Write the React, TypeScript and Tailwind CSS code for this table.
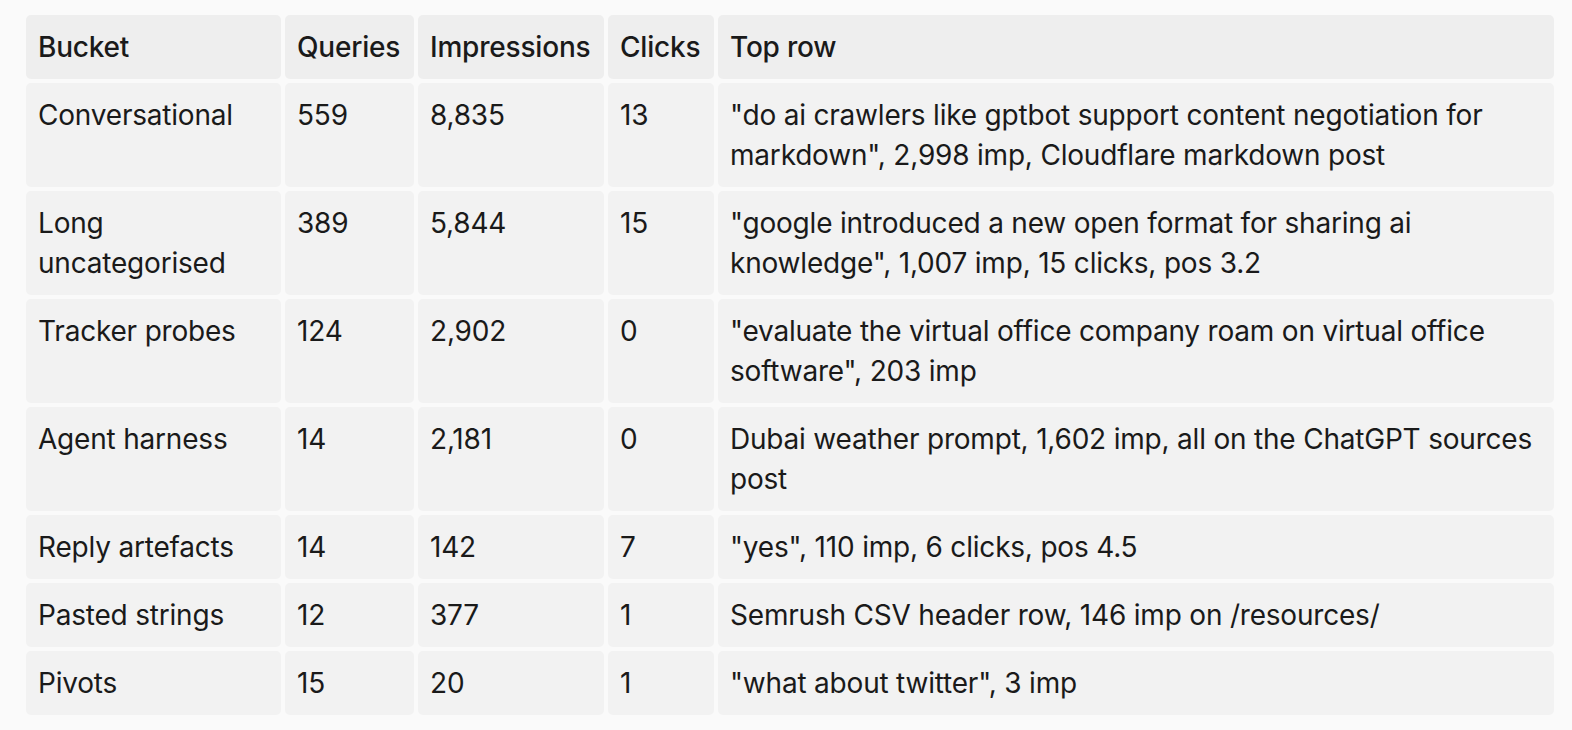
const rows = [
  { bucket: "Conversational", queries: "559", impressions: "8,835", clicks: "13", top: "\"do ai crawlers like gptbot support content negotiation for markdown\", 2,998 imp, Cloudflare markdown post" },
  { bucket: "Long uncategorised", queries: "389", impressions: "5,844", clicks: "15", top: "\"google introduced a new open format for sharing ai knowledge\", 1,007 imp, 15 clicks, pos 3.2" },
  { bucket: "Tracker probes", queries: "124", impressions: "2,902", clicks: "0", top: "\"evaluate the virtual office company roam on virtual office software\", 203 imp" },
  { bucket: "Agent harness", queries: "14", impressions: "2,181", clicks: "0", top: "Dubai weather prompt, 1,602 imp, all on the ChatGPT sources post" },
  { bucket: "Reply artefacts", queries: "14", impressions: "142", clicks: "7", top: "\"yes\", 110 imp, 6 clicks, pos 4.5" },
  { bucket: "Pasted strings", queries: "12", impressions: "377", clicks: "1", top: "Semrush CSV header row, 146 imp on /resources/" },
  { bucket: "Pivots", queries: "15", impressions: "20", clicks: "1", top: "\"what about twitter\", 3 imp" },
];

const th = "rounded-[5px] bg-[#eeeeee] px-3 py-3 text-left align-top font-medium";
const td = "rounded-[5px] bg-[#f2f2f2] px-3 py-3 align-top";

export default function App() {
  return (
    <div className="min-h-screen bg-[#fafafa] pl-[22px] pt-[11px] font-['Inter',sans-serif] text-[28px] leading-[40px] tracking-[-0.2px] text-[#1a1a1a]">
      <table className="table-fixed border-separate border-spacing-[4px]" style={{ width: 1536 }}>
        <colgroup>
          <col className="w-[255px]" />
          <col className="w-[129px]" />
          <col className="w-[186px]" />
          <col className="w-[106px]" />
          <col />
        </colgroup>
        <thead>
          <tr>
            <th className={th}>Bucket</th>
            <th className={th}>Queries</th>
            <th className={th}>Impressions</th>
            <th className={th}>Clicks</th>
            <th className={th}>Top row</th>
          </tr>
        </thead>
        <tbody>
          {rows.map((r) => (
            <tr key={r.bucket}>
              <td className={td}>{r.bucket}</td>
              <td className={td}>{r.queries}</td>
              <td className={td}>{r.impressions}</td>
              <td className={td}>{r.clicks}</td>
              <td className={td}>{r.top}</td>
            </tr>
          ))}
        </tbody>
      </table>
    </div>
  );
}
